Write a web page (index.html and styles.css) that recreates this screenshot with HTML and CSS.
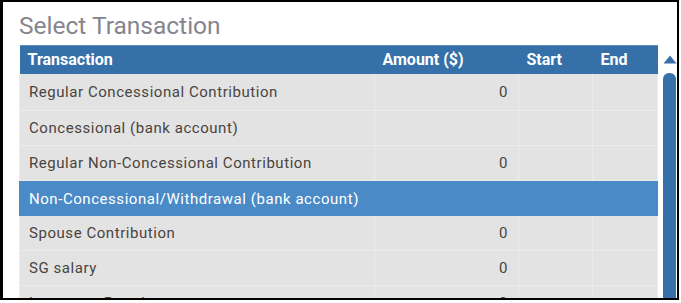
FILE: index.html
```html
<!DOCTYPE html>
<html>
<head>
<meta charset="utf-8">
<link rel="stylesheet" href="styles.css">
</head>
<body>
<div class="frame">
  <h1 class="title">Select Transaction</h1>
  <div class="body">
    <div class="grid-wrap">
      <table class="grid">
        <colgroup>
          <col class="c-name"><col class="c-amt"><col class="c-start"><col class="c-end">
        </colgroup>
        <thead>
          <tr><th>Transaction</th><th>Amount ($)</th><th>Start</th><th>End</th></tr>
        </thead>
        <tbody>
          <tr class="first"><td>Regular Concessional Contribution</td><td class="num">0</td><td></td><td></td></tr>
          <tr><td>Concessional (bank account)</td><td class="num"></td><td></td><td></td></tr>
          <tr><td>Regular Non-Concessional Contribution</td><td class="num">0</td><td></td><td></td></tr>
          <tr class="sel"><td colspan="4">Non-Concessional/Withdrawal (bank account)</td></tr>
          <tr><td>Spouse Contribution</td><td class="num">0</td><td></td><td></td></tr>
          <tr><td>SG salary</td><td class="num">0</td><td></td><td></td></tr>
          <tr><td>Insurance Premium</td><td class="num">0</td><td></td><td></td></tr>
        </tbody>
      </table>
    </div>
    <div class="scroll">
      <svg class="arrow" width="14" height="9" viewBox="0 0 14 9"><path d="M7 0.5 L13.5 8.5 L0.5 8.5 Z" fill="#3a70a8"/></svg>
      <div class="thumb"></div>
    </div>
  </div>
</div>
</body>
</html>
```

FILE: styles.css
```css
html, body {
  margin: 0;
  padding: 0;
  background: #ffffff;
}
.frame {
  box-sizing: border-box;
  width: 679px;
  height: 300px;
  border: 2px solid #000;
  border-left-width: 3px;
  overflow: hidden;
  padding-left: 16px;
  font-family: Roboto, "Liberation Sans", sans-serif;
}
.title {
  margin: 0;
  padding-top: 9px;
  height: 34px;
  font-size: 24.5px;
  font-weight: 400;
  line-height: 30px;
  color: #85858f;
}
.body {
  display: flex;
  align-items: flex-start;
}
.grid-wrap {
  width: 638px;
}
.grid {
  width: 638px;
  border-collapse: collapse;
  table-layout: fixed;
  font-size: 15px;
  letter-spacing: 0.55px;
}
.c-name { width: 355px; }
.c-amt { width: 144px; }
.c-start { width: 74px; }
.c-end { width: 65px; }
.grid th {
  background: #3670a8;
  color: #fff;
  font-weight: 700;
  font-size: 16px;
  letter-spacing: 0;
  text-align: left;
  height: 28px;
  padding: 0 8px;
  box-sizing: border-box;
  border-top: 1px solid #5a8cbf;
  white-space: nowrap;
}
.grid td {
  background: #e3e3e3;
  color: #4a443f;
  height: 35px;
  padding: 0 9px;
  box-sizing: border-box;
  border: 1px solid #ececec;
  border-top: none;
  white-space: nowrap;
}
.grid tr.first td {
  height: 37px;
  padding-top: 1px;
}
.grid td.num {
  text-align: right;
  padding-right: 10px;
}
.grid tr.sel td {
  background: #4a8ac6;
  color: #fff;
  border-color: #4a8ac6;
  padding-top: 1px;
}
.scroll {
  margin-left: 6px;
  width: 13px;
  display: flex;
  flex-direction: column;
  align-items: center;
}
.arrow {
  margin-top: 10px;
  display: block;
}
.thumb {
  margin-top: 9px;
  width: 13px;
  height: 260px;
  background: #3670a8;
  border-radius: 6px 6px 0 0;
}
```
